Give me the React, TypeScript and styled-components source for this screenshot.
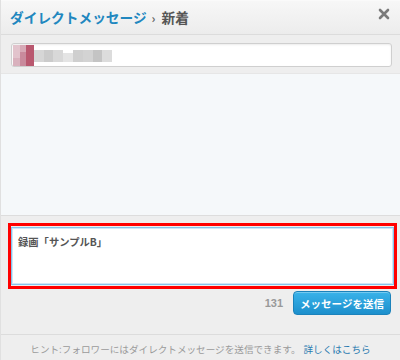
import React from 'react';
import styled, { createGlobalStyle } from 'styled-components';

const GlobalStyle = createGlobalStyle`
  html, body {
    margin: 0;
    padding: 0;
    background: #eeeeee;
  }
  * {
    box-sizing: border-box;
  }
`

const jpFont = `"Noto Sans CJK JP", "Noto Sans", sans-serif`

const Dialog = styled.div`
  width: 400px;
  height: 360px;
  display: flex;
  flex-direction: column;
  background: #eeeeee;
  border-left: 1px solid #e0e0e0;
  font-family: ${jpFont};
  overflow: hidden;
`

const Header = styled.div`
  height: 35px;
  display: flex;
  align-items: center;
  justify-content: space-between;
  padding: 0 10px 0 9px;
  background: linear-gradient(#f7f7f7, #ececec);
  border-top: 1px solid #fafafa;
  border-bottom: 1px solid #dcdcdc;
`

const Title = styled.h2`
  margin: 0;
  font-size: 13.7px;
  font-weight: bold;
  line-height: 1;
  color: #2187bf;
  letter-spacing: 0;
`

const Crumb = styled.span`
  color: #555;
`

const Sep = styled.span`
  color: #666;
  font-size: 12px;
  margin: 0 6px 0 5px;
`

const Close = styled.button`
  width: 12px;
  height: 12px;
  padding: 0;
  border: none;
  background: none;
  margin-bottom: 7px;
  cursor: pointer;
  display: flex;
`

const RecipientRow = styled.div`
  padding: 8px 8px 6px 10px;
`

const RecipientField = styled.div`
  height: 24px;
  display: flex;
  align-items: center;
  background: #fff;
  border: 1px solid #cfcfcf;
  border-radius: 3px;
  box-shadow: inset 0 1px 2px rgba(0, 0, 0, 0.08);
  padding-left: 1px;
`

const MessageList = styled.div`
  height: 143px;
  background: #f5f8fa;
  border-top: 1px solid #e6e6e6;
  border-bottom: 1px solid #dddddd;
`

const Compose = styled.div`
  padding: 7px 3px 0 7px;
`

const Highlight = styled.div`
  border: 3px solid #ff0000;
  padding: 1px 0 1px 0;
`

const TextBox = styled.div`
  height: 58px;
  background: #fff;
  border: 1px solid #86c3ea;
  box-shadow: inset 0 0 0 1px #cfe7f7;
  padding: 8px 6px;
  font-size: 10.3px;
  font-weight: bold;
  color: #555;
  line-height: 1.2;
`

const SendRow = styled.div`
  display: flex;
  justify-content: flex-end;
  align-items: center;
  gap: 10px;
  padding: 2px 9px 0 0;
`

const Counter = styled.span`
  font-family: "Liberation Sans", Arial, sans-serif;
  font-size: 11px;
  font-weight: bold;
  color: #999;
`

const SendButton = styled.button`
  height: 24px;
  width: 98px;
  padding: 0;
  border: 1px solid #1b82bb;
  border-radius: 4px;
  background: linear-gradient(#3ab3ea, #1c8fcc);
  box-shadow: inset 0 1px 0 rgba(255, 255, 255, 0.3);
  color: #fff;
  font-family: ${jpFont};
  font-size: 10.5px;
  font-weight: bold;
  cursor: pointer;
`

const Footer = styled.div`
  margin-top: auto;
  height: 26px;
  display: flex;
  align-items: center;
  justify-content: center;
  padding-top: 2px;
  border-top: 1px solid #dcdcdc;
  font-size: 9.6px;
  color: #9a9a9a;
  white-space: nowrap;
`

const HelpLink = styled.a`
  color: #2a7ab0;
  text-decoration: none;
  margin-left: 3px;
`

function BlurredName() {
  // pixelated (mosaic) recipient name
  const blocks: [number, number, number, number, string][] = [
    [0, 0, 7, 21, '#e2c3cc'],
    [7, 0, 6, 7, '#d7a9b6'],
    [7, 7, 6, 14, '#c98a9c'],
    [13, 0, 8, 21, '#b9586f'],
    [0, 13, 7, 8, '#d9b1bd'],
    [21, 5, 10, 12, '#d6d6d6'],
    [31, 5, 9, 12, '#cbcbcb'],
    [40, 5, 10, 12, '#d8d8d8'],
    [50, 8, 10, 9, '#e4e4e4'],
    [60, 5, 10, 12, '#cfcfcf'],
    [70, 5, 10, 12, '#d3d3d3'],
    [80, 5, 9, 12, '#c4c4c4'],
    [89, 5, 10, 12, '#dcdcdc'],
  ]
  return (
    <svg width="99" height="21" viewBox="0 0 99 21">
      {blocks.map(([x, y, w, h, c], i) => (
        <rect key={i} x={x} y={y} width={w} height={h} fill={c} />
      ))}
    </svg>
  )
}

export default function App() {
  return (
    <>
      <GlobalStyle />
      <Dialog>
        <Header>
          <Title>
            ダイレクトメッセージ<Crumb><Sep>›</Sep>新着</Crumb>
          </Title>
          <Close aria-label="close">
            <svg width="12" height="12" viewBox="0 0 12 12">
              <path d="M2 2L10 10M10 2L2 10" stroke="#7a7a7a" strokeWidth="2.6" strokeLinecap="round" />
            </svg>
          </Close>
        </Header>
        <RecipientRow>
          <RecipientField>
            <BlurredName />
          </RecipientField>
        </RecipientRow>
        <MessageList />
        <Compose>
          <Highlight>
            <TextBox>録画「サンプルB」</TextBox>
          </Highlight>
        </Compose>
        <SendRow>
          <Counter>131</Counter>
          <SendButton>メッセージを送信</SendButton>
        </SendRow>
        <Footer>
          ヒント:フォロワーにはダイレクトメッセージを送信できます。
          <HelpLink href="#">詳しくはこちら</HelpLink>
        </Footer>
      </Dialog>
    </>
  );
}
